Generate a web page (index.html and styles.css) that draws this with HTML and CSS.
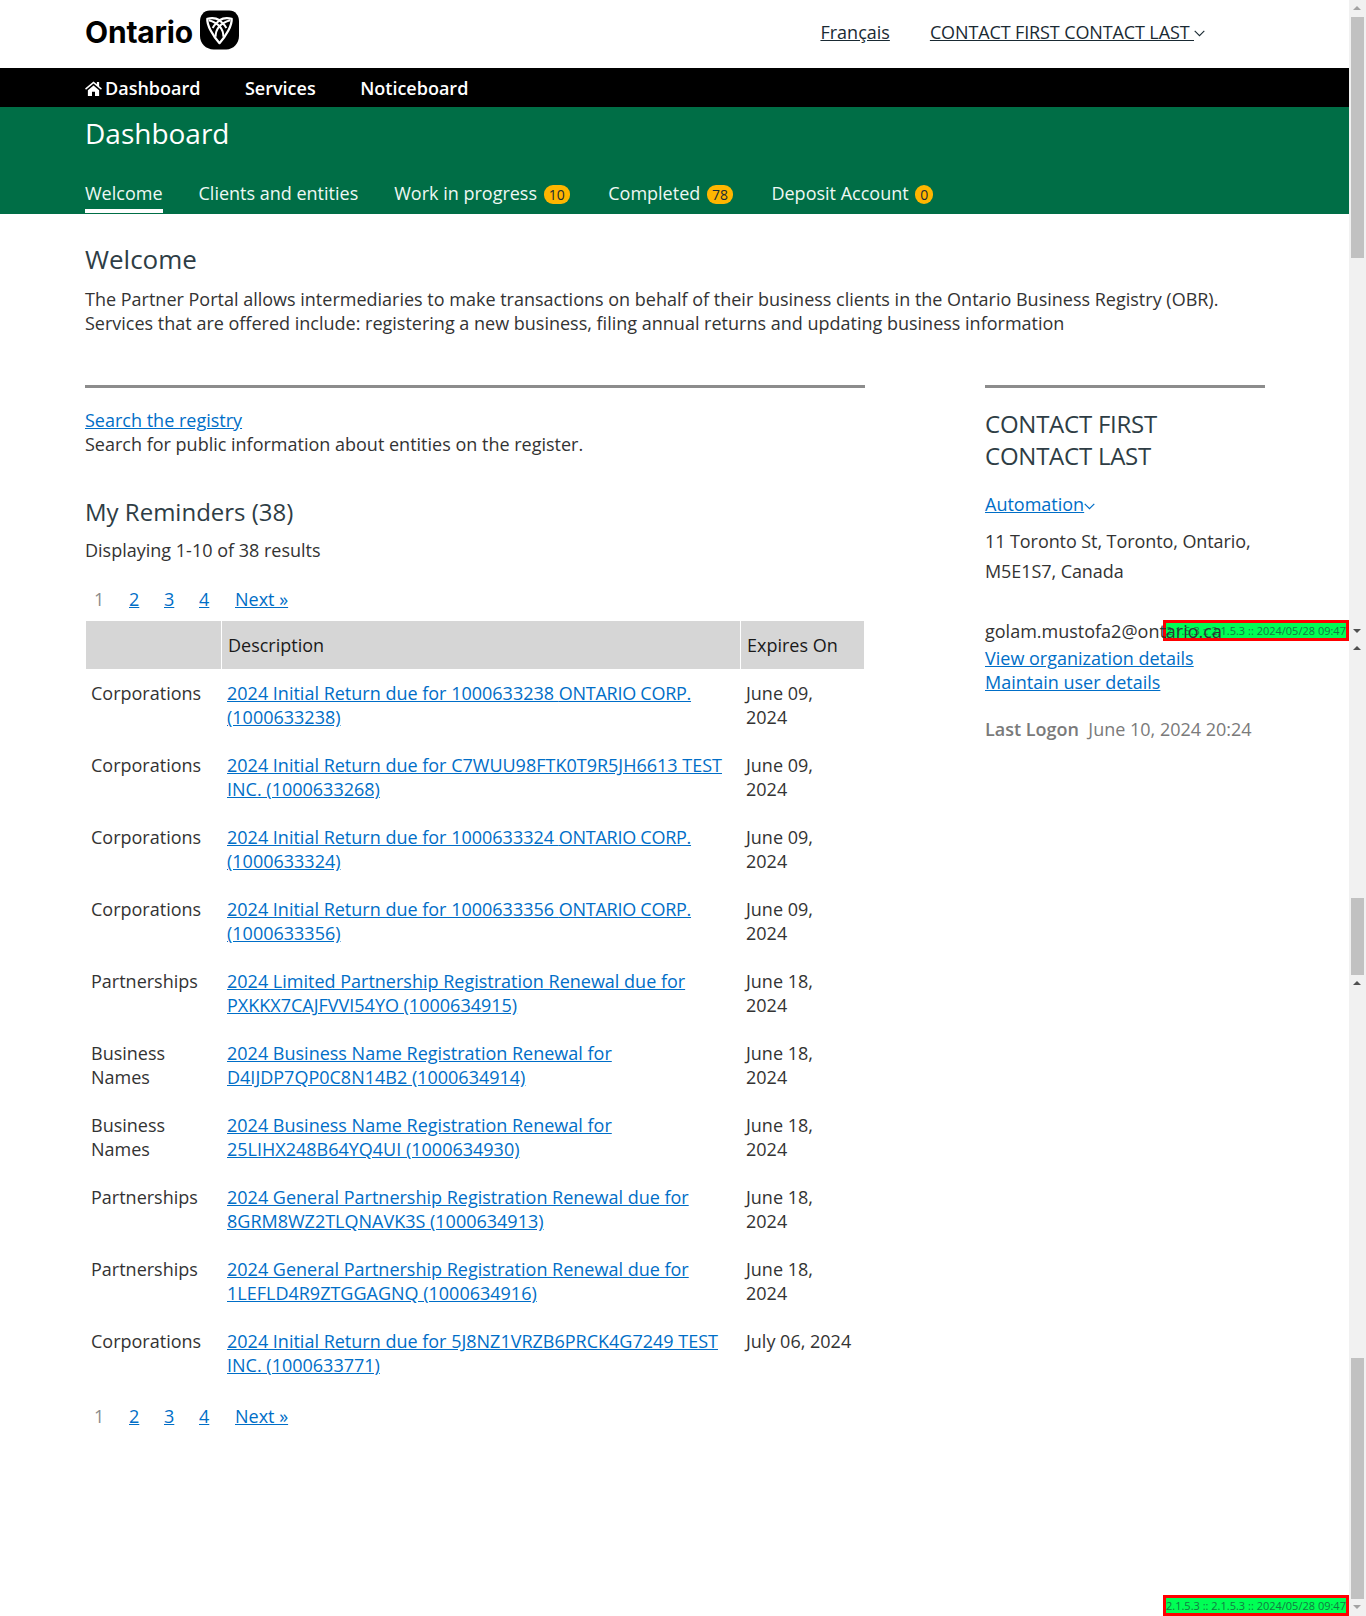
FILE: index.html
```html
<!DOCTYPE html>
<html lang="en">
<head>
<meta charset="utf-8">
<title>Dashboard</title>
<link rel="stylesheet" href="styles.css">
</head>
<body>
<div class="window">
  <div class="page">
    <div class="version version-mid">2.1.5.3 :: 2.1.5.3 :: 2024/05/28 09:47</div>
    <div class="version version-end">2.1.5.3 :: 2.1.5.3 :: 2024/05/28 09:47</div>
    <header class="top">
      <div class="brand">
        <span class="wordmark">Ontario</span>
        <svg class="emblem" viewBox="0 0 40 40" aria-hidden="true">
          <path d="M10 0H30C36 0 40 5 40 11V26C40 34 34 40 27 40H14C6 40 0 34 0 26V11C0 5 4 0 10 0Z" fill="#000"/>
          <path d="M7.5 8.5C13 7 17 8 20 10C23 8 27 7 32.5 8.5C33 15 27 26 20 33.5C13 26 7 15 7.5 8.5Z" fill="none" stroke="#fff" stroke-width="2.3" stroke-linejoin="round"/>
          <path d="M9 10C16 12 24 17 24 27M31 10C24 12 16 17 16 27M20 10C17 13 15 14 13 18M20 10C23 13 25 14 27 18" fill="none" stroke="#fff" stroke-width="2"/>
        </svg>
      </div>
      <nav class="utility">
        <a href="#">Français</a>
        <a class="account" href="#">CONTACT FIRST CONTACT LAST <svg class="chev" viewBox="0 0 11 7"><path d="M.7.9l4.8 4.8L10.3.9" fill="none" stroke="currentColor" stroke-width="1.1"/></svg></a>
      </nav>
    </header>
    <nav class="mainnav">
      <a href="#"><svg class="home" viewBox="0 0 18 16" aria-hidden="true"><path d="M9 0.5L0 8l1 1.3L9 2.6l8 6.7L18 8l-3-2.5V1h-2.4v2.5zM3 9.8V16h4.4v-4.6h3.2V16H15V9.8L9 4.8z" fill="#fff"/></svg>Dashboard</a>
      <a href="#">Services</a>
      <a href="#">Noticeboard</a>
    </nav>
    <section class="band">
      <h1>Dashboard</h1>
      <div class="tabs">
        <a class="tab active" href="#">Welcome</a>
        <a class="tab" href="#">Clients and entities</a>
        <a class="tab" href="#">Work in progress <span class="badge">10</span></a>
        <a class="tab" href="#">Completed <span class="badge">78</span></a>
        <a class="tab" href="#">Deposit Account <span class="badge">0</span></a>
      </div>
    </section>
    <main class="content">
      <h2 class="welcome">Welcome</h2>
      <p class="intro">The Partner Portal allows intermediaries to make transactions on behalf of their business clients in the Ontario Business Registry (OBR). Services that are offered include: registering a new business, filing annual returns and updating business information</p>
      <div class="columns">
        <div class="primary">
          <p class="search"><a href="#">Search the registry</a><br>Search for public information about entities on the register.</p>
          <h2 class="reminders">My Reminders (38)</h2>
          <p class="count">Displaying 1-10 of 38 results</p>
          <div class="pager">
            <span class="current">1</span><a href="#">2</a><a href="#">3</a><a href="#">4</a><a class="next" href="#">Next »</a>
          </div>
          <table>
            <thead><tr><th class="c1"></th><th class="c2">Description</th><th class="c3">Expires On</th></tr></thead>
            <tbody>
              <tr><td>Corporations</td><td><a href="#">2024 Initial Return due for 1000633238 <span class="caps">ONTARIO CORP.</span> (1000633238)</a></td><td>June 09, 2024</td></tr>
              <tr><td>Corporations</td><td><a href="#">2024 Initial Return due for C7WUU98FTK0T9R5JH6613 TEST INC. (1000633268)</a></td><td>June 09, 2024</td></tr>
              <tr><td>Corporations</td><td><a href="#">2024 Initial Return due for 1000633324 <span class="caps">ONTARIO CORP.</span> (1000633324)</a></td><td>June 09, 2024</td></tr>
              <tr><td>Corporations</td><td><a href="#">2024 Initial Return due for 1000633356 <span class="caps">ONTARIO CORP.</span> (1000633356)</a></td><td>June 09, 2024</td></tr>
              <tr><td>Partnerships</td><td><a href="#">2024 Limited Partnership Registration Renewal due for PXKKX7CAJFVVI54YO (1000634915)</a></td><td>June 18, 2024</td></tr>
              <tr><td>Business Names</td><td><a href="#">2024 Business Name Registration Renewal for D4IJDP7QP0C8N14B2 (1000634914)</a></td><td>June 18, 2024</td></tr>
              <tr><td>Business Names</td><td><a href="#">2024 Business Name Registration Renewal for 25LIHX248B64YQ4UI (1000634930)</a></td><td>June 18, 2024</td></tr>
              <tr><td>Partnerships</td><td><a href="#">2024 General Partnership Registration Renewal due for 8GRM8WZ2TLQNAVK3S (1000634913)</a></td><td>June 18, 2024</td></tr>
              <tr><td>Partnerships</td><td><a href="#">2024 General Partnership Registration Renewal due for 1LEFLD4R9ZTGGAGNQ (1000634916)</a></td><td>June 18, 2024</td></tr>
              <tr><td>Corporations</td><td><a href="#">2024 Initial Return due for 5J8NZ1VRZB6PRCK4G7249 TEST INC. (1000633771)</a></td><td>July 06, 2024</td></tr>
            </tbody>
          </table>
          <div class="pager bottom">
            <span class="current">1</span><a href="#">2</a><a href="#">3</a><a href="#">4</a><a class="next" href="#">Next »</a>
          </div>
        </div>
        <aside class="side">
          <h2 class="name">CONTACT FIRST CONTACT LAST</h2>
          <p class="org"><a href="#">Automation<svg class="chev" viewBox="0 0 11 7"><path d="M.7.9l4.8 4.8L10.3.9" fill="none" stroke="currentColor" stroke-width="1.2"/></svg></a></p>
          <p class="address">11 Toronto St, Toronto, Ontario, M5E1S7, Canada</p>
          <p class="email">golam.mustofa2@ontario.ca</p>
          <p class="links"><a href="#">View organization details</a><br><a href="#">Maintain user details</a></p>
          <p class="logon"><strong>Last Logon</strong>&nbsp; June 10, 2024 20:24</p>
        </aside>
      </div>
    </main>
  </div>
  <div class="scrollbar" aria-hidden="true">
    <div class="sb-arrow up idle"></div>
    <div class="sb-thumb thumb-long"></div>
    <div class="sb-gap gap-a"></div>
    <div class="sb-arrow down"></div>
    <div class="sb-arrow up"></div>
    <div class="sb-gap gap-b"></div>
    <div class="sb-thumb thumb-short"></div>
    <div class="sb-arrow up"></div>
    <div class="sb-gap gap-c"></div>
    <div class="sb-thumb thumb-long"></div>
    <div class="sb-arrow down idle"></div>
  </div>
</div>
</body>
</html>
```

FILE: styles.css
```css
* { box-sizing: border-box; }
html, body { margin: 0; padding: 0; height: 1616px; overflow: hidden; background: #fff; }
body { font-family: "Open Sans", "Liberation Sans", sans-serif; font-size: 18px; line-height: 24px; color: #333; }
a { color: #006ec7; }
p { margin: 0; }
h1, h2 { font-weight: 400; margin: 0; }

.window { display: flex; height: 1616px; }
.page { position: relative; width: 1349px; flex: none; }

.top { height: 68px; display: flex; align-items: flex-start; justify-content: space-between; padding: 0 144px 0 85px; }
.brand { display: flex; align-items: flex-start; gap: 7px; padding-top: 10px; }
.wordmark { font-family: Inter, "Open Sans", sans-serif; font-weight: 700; font-size: 30px; line-height: 44px; color: #000; letter-spacing: -0.2px; }
.emblem { width: 39px; height: 40px; display: block; }
.utility { display: flex; gap: 40px; padding-top: 20px; }
.utility a { color: #1a2a33; }
.account { letter-spacing: -0.12px; }
.chev { width: 11px; height: 7px; vertical-align: 2px; }

.mainnav { height: 39px; background: #000; display: flex; gap: 44.5px; padding: 0 85px; align-items: center; }
.mainnav a { color: #fff; font-weight: 600; text-decoration: none; }
.home { width: 17px; height: 15px; margin-right: 3px; vertical-align: -1px; }

.band { height: 107px; background: #006e46; padding: 8px 85px 0; color: #fff; }
.band h1 { font-size: 28px; line-height: 36px; }
.tabs { display: flex; gap: 36px; margin-top: 26px; }
.tab { color: #eef8f4; text-decoration: none; height: 36px; padding-top: 4px; }
.tab.active { border-bottom: 4px solid #fff; }
.badge { display: inline-block; min-width: 18px; height: 19px; padding: 0 5px; border-radius: 9px; background: #ffb600; color: #1a2a33; font-size: 14px; line-height: 19px; text-align: center; vertical-align: 0; margin: 0 2.5px 0 2px; }

.content { position: relative; z-index: 1; padding: 0 84px 0 85px; }
.welcome { font-size: 26px; line-height: 36px; margin-top: 27px; color: #2e3d45; }
.intro { margin-top: 10px; }

.columns { display: flex; justify-content: space-between; margin-top: 50px; }
.primary { width: 780px; border-top: 3px solid #8c8c8c; }
.side { width: 280px; border-top: 3px solid #8c8c8c; }

.search { margin-top: 20px; }
.reminders { font-size: 24px; line-height: 32px; margin-top: 40px; color: #2e3d45; }
.count { margin-top: 10px; }
.pager { display: flex; margin-top: 25px; height: 24px; padding-left: 9px; }
.pager a, .pager .current { width: 35px; }
.pager .current { color: #8c8c8c; }
.pager .next { width: auto; margin-left: 1px; }
.pager.bottom { margin-top: 15px; }

table { border-collapse: separate; border-spacing: 1px 0; width: 780px; table-layout: fixed; margin: 10px 0 0; }
.c1 { width: 135px; }
.c3 { width: 123px; }
th { background: #d6d6d6; height: 48px; font-weight: 400; text-align: left; padding: 0 6px; color: #1a1a1a; }
td { vertical-align: top; padding: 12px 7px 12px 5px; }
.caps { letter-spacing: -0.26px; }

.name { font-size: 24px; line-height: 32px; margin-top: 20px; color: #2e3d45; letter-spacing: -0.24px; }
.org { margin-top: 20px; }
.org .chev { vertical-align: 1px; }
.address { margin-top: 10px; line-height: 30px; letter-spacing: -0.08px; }
.email { margin-top: 33px; }
.links { margin-top: 3px; }
.logon { margin-top: 23px; color: #7a7a7a; }
.logon strong { font-weight: 600; }

.version { position: absolute; left: 1163px; width: 186px; height: 21px; border: 3px solid #f00; background: #00ff55; color: #147a42; font-size: 11px; line-height: 15px; white-space: nowrap; overflow: hidden; }
.version-mid { top: 620px; }
.version-end { top: 1595px; }

.scrollbar { width: 17px; flex: none; height: 1616px; background: #f1f1f1; display: flex; flex-direction: column; align-items: center; }
.sb-arrow { height: 17px; width: 17px; flex: none; position: relative; }
.sb-arrow::before { content: ""; position: absolute; left: 4px; top: 6px; border-left: 4px solid transparent; border-right: 4px solid transparent; }
.sb-arrow.up::before { border-bottom: 4px solid #505050; }
.sb-arrow.down::before { border-top: 4px solid #505050; }
.sb-arrow.up.idle::before { border-bottom-color: #a3a3a3; }
.sb-arrow.down.idle::before { border-top-color: #a3a3a3; }
.sb-thumb { width: 13px; flex: none; background: #c1c1c1; }
.sb-gap { flex: none; }
.thumb-long { height: 241px; }
.thumb-short { height: 77px; }
.gap-a { height: 365px; }
.gap-b { height: 241px; }
.gap-c { height: 366px; }
```
